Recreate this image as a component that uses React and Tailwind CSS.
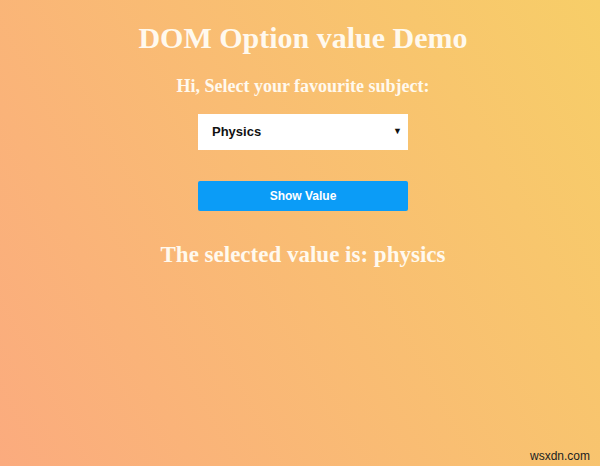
import React from 'react';

export default function App() {
  return (
    <div className="relative h-[466px] w-[600px] overflow-hidden bg-[#FBAB7E] bg-[linear-gradient(62deg,#FBAB7E_0%,#F7CE68_100%)] font-['Liberation_Serif',serif]">
      <div className="flex flex-col items-center pl-[6px] pt-[20px]">
        <h1 className="text-[30px] font-bold leading-[36px] text-[#fff9ee]">DOM Option value Demo</h1>
        <h3 className="mt-[20px] text-[18px] font-bold leading-[20px] text-[#fff9ee]">Hi, Select your favourite subject:</h3>
        <div className="mt-[18px] flex h-[36px] w-[210px] items-center justify-between bg-white pl-[14px] pr-[6px] font-['Liberation_Sans',sans-serif] text-[13px] font-bold text-[#111]">
          <span>Physics</span>
          <span className="text-[9px]">▼</span>
        </div>
        <button className="mt-[31px] h-[30px] w-[210px] rounded-[2px] bg-[#0b9cf7] font-['Liberation_Sans',sans-serif] text-[12px] font-bold text-white">
          Show Value
        </button>
        <h2 className="mt-[31px] text-[23px] font-bold leading-[26px] text-[#fff9ee]">The selected value is: physics</h2>
      </div>
      <span className="absolute bottom-[1px] right-[10px] font-['Liberation_Sans',sans-serif] text-[12px] text-[#222]">wsxdn.com</span>
    </div>
  );
}
